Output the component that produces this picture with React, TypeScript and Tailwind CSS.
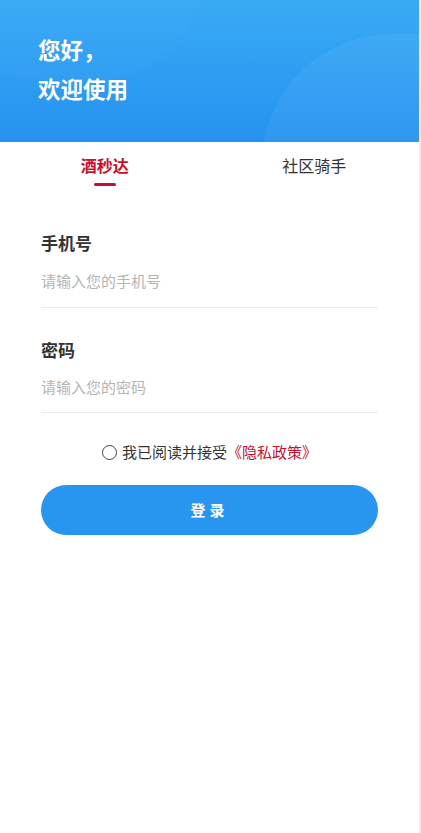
import { useState } from "react";

export default function App() {
  const [tab, setTab] = useState(0);
  const [phone, setPhone] = useState("");
  const [password, setPassword] = useState("");
  const [agreed, setAgreed] = useState(false);

  const tabs = ["酒秒达", "社区骑手"];

  return (
    <div
      className="flex h-[833px] w-[421px] overflow-hidden bg-white"
      style={{ fontFamily: '"Noto Sans CJK SC", "Noto Sans", sans-serif' }}
    >
      <div className="flex w-[419px] flex-col">
        {/* header */}
        <div className="relative h-[142px] overflow-hidden bg-gradient-to-b from-[#39aaf5] to-[#2592ef]">
          <div className="absolute left-[262px] top-[34px] h-[260px] w-[320px] rounded-full bg-white/5" />
          <div className="absolute -left-[60px] -top-[120px] h-[200px] w-[260px] rounded-full bg-white/[0.015]" />
          <div className="relative pl-[38px] pt-[30px] text-[22.5px] font-semibold leading-[39px] text-white">
            <div>您好，</div>
            <div>欢迎使用</div>
          </div>
        </div>

        {/* tabs */}
        <div className="flex h-[52px]">
          {tabs.map((name, i) => (
            <button
              key={name}
              onClick={() => setTab(i)}
              className="flex flex-1 flex-col items-center pt-[12px]"
            >
              <span
                className={
                  i === tab
                    ? "text-[16px] font-bold leading-[22px] text-[#c8102e]"
                    : "text-[16px] leading-[22px] text-[#333333]"
                }
              >
                {name}
              </span>
              {i === tab && <span className="mt-[7px] h-[3px] w-[22px] rounded-full bg-[#c8102e]" />}
            </button>
          ))}
        </div>

        {/* form */}
        <div className="flex flex-col px-[41px] pt-[37px]">
          <label className="text-[17px] font-bold leading-[24px] text-[#333333]">手机号</label>
          <input
            value={phone}
            onChange={(e) => setPhone(e.target.value)}
            placeholder="请输入您的手机号"
            className="mt-[10px] h-[30px] border-0 text-[15px] text-[#333333] outline-none placeholder:text-[#b5b5b5]"
          />
          <div className="mt-[12px] h-px bg-[#ececec]" />

          <label className="mt-[30px] text-[17px] font-bold leading-[24px] text-[#333333]">密码</label>
          <input
            type="password"
            value={password}
            onChange={(e) => setPassword(e.target.value)}
            placeholder="请输入您的密码"
            className="mt-[9px] h-[30px] border-0 text-[15px] text-[#333333] outline-none placeholder:text-[#b5b5b5]"
          />
          <div className="mt-[11px] h-px bg-[#ececec]" />

          <div
            className="mt-[29px] flex items-center justify-center text-[15px] leading-[20px] text-[#333333]"
            onClick={() => setAgreed(!agreed)}
          >
            <span
              className={
                agreed
                  ? "mr-[5px] h-[15px] w-[15px] rounded-full border-[1.5px] border-[#2896ef] bg-[#2896ef]"
                  : "mr-[5px] h-[15px] w-[15px] rounded-full border-[1.5px] border-[#444444]"
              }
            />
            <span>我已阅读并接受</span>
            <span className="text-[#c8102e]">《隐私政策》</span>
          </div>

          <button className="mt-[23px] h-[50px] rounded-full bg-[#2896ef] text-[15px] font-bold tracking-[4px] text-white">
            登录
          </button>
        </div>
      </div>
      <div className="w-[2px] bg-[#ececec]" />
    </div>
  );
}
